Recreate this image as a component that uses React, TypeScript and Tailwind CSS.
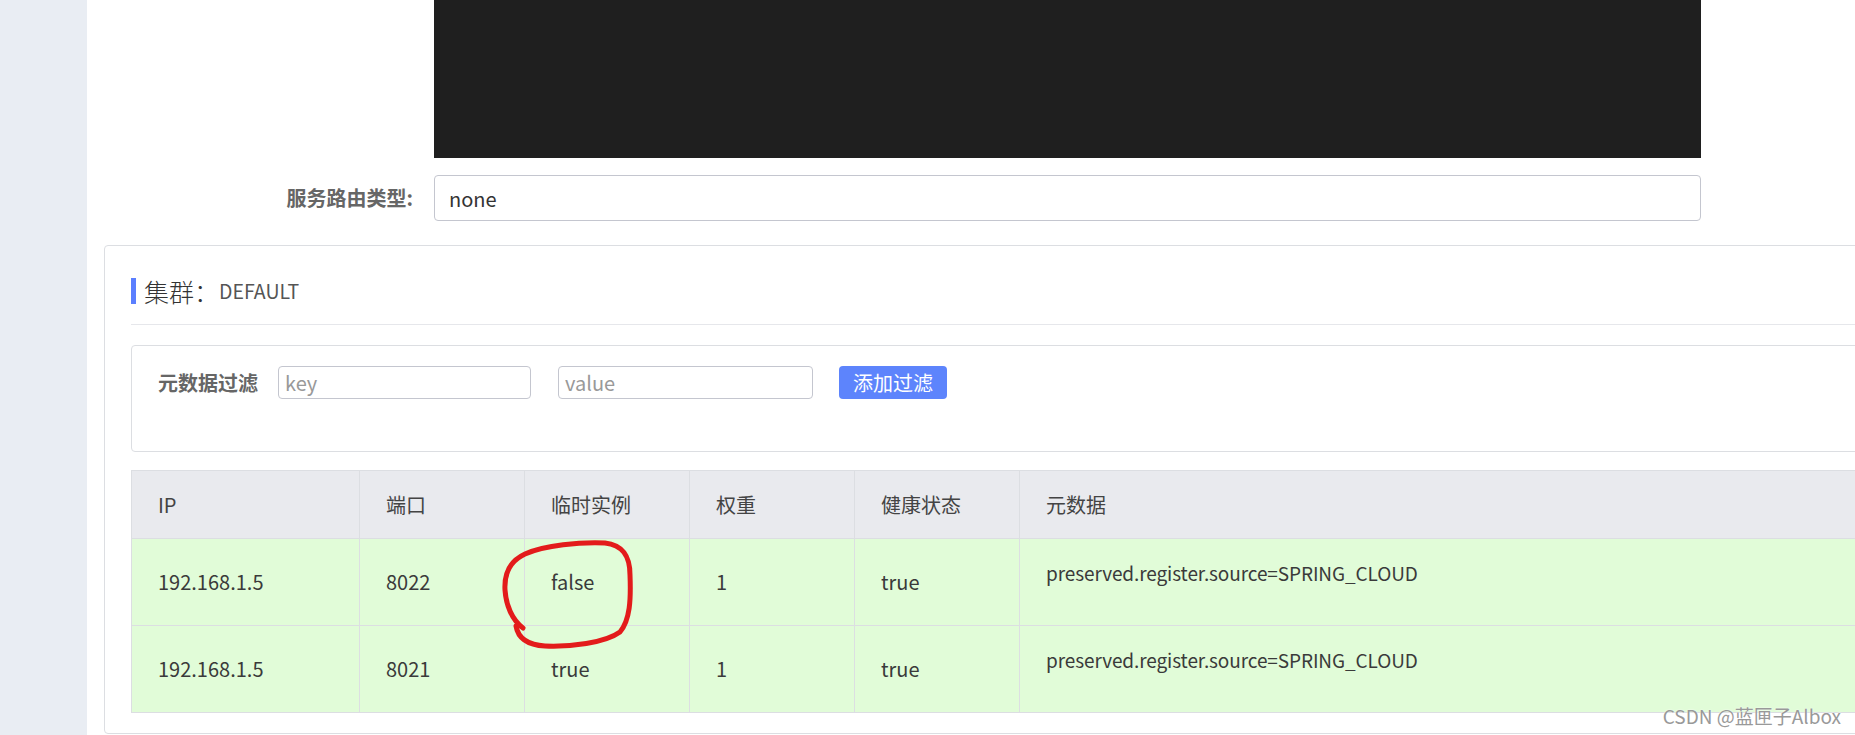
import React from 'react';

const columns = [
  { title: 'IP', width: 'w-[228px]' },
  { title: '端口', width: 'w-[165px]' },
  { title: '临时实例', width: 'w-[165px]' },
  { title: '权重', width: 'w-[165px]' },
  { title: '健康状态', width: 'w-[165px]' },
  { title: '元数据', width: '' },
];

const instances = [
  { ip: '192.168.1.5', port: '8022', ephemeral: 'false', weight: '1', healthy: 'true', metadata: 'preserved.register.source=SPRING_CLOUD' },
  { ip: '192.168.1.5', port: '8021', ephemeral: 'true', weight: '1', healthy: 'true', metadata: 'preserved.register.source=SPRING_CLOUD' },
];

const App = () => {
  return (
    <div className="relative flex w-[1855px] h-[735px] overflow-hidden bg-white font-['Noto_Sans_CJK_SC',sans-serif] text-[#333]">
      <aside className="w-[87px] shrink-0 bg-[#e9edf3]" />

      <main className="flex-1 min-w-0 pl-[17px]">
        {/* service form */}
        <div className="grid grid-cols-[309px_1267px] gap-x-[21px] gap-y-[17px] items-center">
          <div />
          <div className="h-[158px] bg-[#1f1f1f]" />
          <label className="text-right text-[20px] leading-[28px] font-bold text-[#666]">服务路由类型:</label>
          <input
            readOnly
            value="none"
            className="h-[46px] px-[14px] border border-[#c4c6cf] rounded-[4px] text-[20px] text-[#333] outline-none font-['Noto_Sans_CJK_SC',sans-serif]"
          />
        </div>

        {/* cluster panel */}
        <section className="mt-[24px] w-[1810px] border border-[#dcdee2] rounded-[4px] pt-[32px] px-[26px] pb-[20px]">
          <div className="flex items-center h-[26px] border-l-[5px] border-[#5b7fff] pl-[8px]">
            <span className="text-[25px] leading-[26px] font-light text-[#333]">集群：</span>
            <span className="text-[19.5px] leading-[26px] text-[#555]">DEFAULT</span>
          </div>
          <div className="mt-[20px] border-b border-[#e6e7eb]" />

          <div className="mt-[20px] h-[107px] border border-[#dcdee2] rounded-[4px] pt-[20px] pl-[26px]">
            <div className="flex items-center">
              <span className="text-[20px] leading-[28px] font-bold text-[#666]">元数据过滤</span>
              <input
                placeholder="key"
                className="ml-[20px] w-[253px] h-[33px] px-[6px] border border-[#c4c6cf] rounded-[4px] text-[20px] outline-none placeholder:text-[#999] font-['Noto_Sans_CJK_SC',sans-serif]"
              />
              <input
                placeholder="value"
                className="ml-[27px] w-[255px] h-[33px] px-[6px] border border-[#c4c6cf] rounded-[4px] text-[20px] outline-none placeholder:text-[#999] font-['Noto_Sans_CJK_SC',sans-serif]"
              />
              <button className="ml-[26px] w-[108px] h-[33px] rounded-[4px] bg-[#5d84fc] text-white text-[20px] leading-[33px] font-['Noto_Sans_CJK_SC',sans-serif]">
                添加过滤
              </button>
            </div>
          </div>

          <div className="relative mt-[18px]">
            <table className="w-full border-collapse table-fixed">
              <thead>
                <tr className="bg-[#e9eaee]">
                  {columns.map((col) => (
                    <th
                      key={col.title}
                      className={`${col.width} h-[68px] border border-[#dcdee2] pl-[26px] text-left font-normal text-[20px] text-[#444]`}
                    >
                      {col.title}
                    </th>
                  ))}
                </tr>
              </thead>
              <tbody>
                {instances.map((row, i) => (
                  <tr key={i} className="bg-[#e1fcd8] text-[#3a3a3a]">
                    <td className="h-[87px] border border-[#dcdee2] pl-[26px] text-[20px]">{row.ip}</td>
                    <td className="border border-[#dcdee2] pl-[26px] text-[20px]">{row.port}</td>
                    <td className="border border-[#dcdee2] pl-[26px] text-[20px]">{row.ephemeral}</td>
                    <td className="border border-[#dcdee2] pl-[26px] text-[20px]">{row.weight}</td>
                    <td className="border border-[#dcdee2] pl-[26px] text-[20px]">{row.healthy}</td>
                    <td className="border border-[#dcdee2] pl-[26px] pb-[18px] text-[19px] tracking-[-0.1px]">{row.metadata}</td>
                  </tr>
                ))}
              </tbody>
            </table>

            {/* hand-drawn annotation */}
            <svg
              className="absolute left-[364px] top-[65px] pointer-events-none"
              width="145"
              height="120"
              viewBox="495 535 145 120"
              fill="none"
            >
              <path
                d="M 523 628 C 512 620, 506 605, 505 590 C 504 572, 512 560, 525 554 C 545 545, 580 542, 605 543 C 622 545, 630 555, 630 575 C 631 600, 630 620, 620 632 C 605 643, 570 647, 545 646 C 528 645, 518 638, 516 626"
                stroke="#e31b1b"
                strokeWidth="5"
                strokeLinecap="round"
                strokeLinejoin="round"
              />
            </svg>
          </div>
        </section>
      </main>

      <div className="absolute right-[14px] bottom-[7px] text-[19px] leading-[24px] text-[#999] [text-shadow:0_0_2px_#fff]">
        CSDN @蓝匣子Albox
      </div>
    </div>
  );
};

export default App;
